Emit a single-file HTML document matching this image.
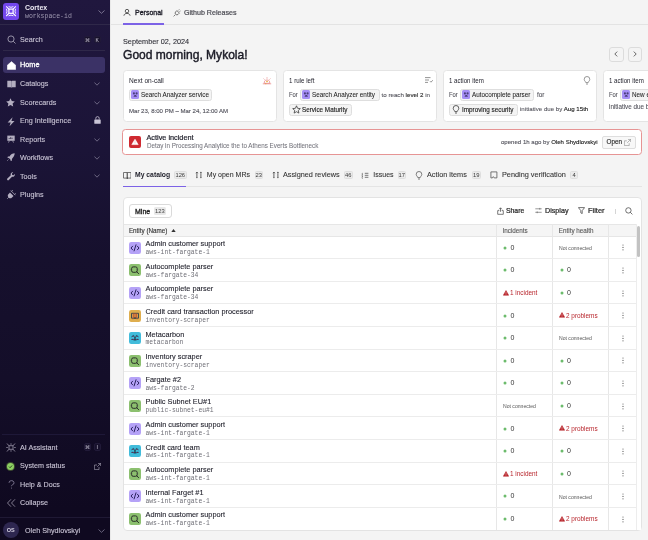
<!DOCTYPE html>
<html><head><meta charset="utf-8">
<style>
*{box-sizing:border-box;margin:0;padding:0}
html,body{width:648px;height:540px;overflow:hidden}
body{font-family:"Liberation Sans",sans-serif;background:#f4f4f4;position:relative;color:#1b1b24}
.abs{position:absolute}
svg{display:block}
.nowrap{white-space:nowrap}
.mono{font-family:"Liberation Mono",monospace}
.tx{position:absolute;line-height:10px;white-space:nowrap;color:#1d1d28}
.tx b{color:#222}
#sb{position:absolute;left:0;top:0;width:110px;height:540px;background:linear-gradient(180deg,#20173e 0%,#1b1437 28%,#16102d 48%,#140e29 70%,#0f0920 94%,#0f0920 100%);color:#d9d5e6}
#sb .t{position:absolute;left:20px;font-size:7.2px;line-height:8px;color:#c8c3d4;-webkit-text-stroke:.12px #c8c3d4;white-space:nowrap}
#sb svg{position:absolute}
.kb{position:absolute;width:7.3px;height:7.8px;border-radius:2px;border:.6px solid #211a38;background:#17112c;font-size:5px;line-height:6.6px;text-align:center;color:#d5d0e0}
.nb{position:absolute;top:47px;width:14.5px;height:14.7px;border:1px solid #dcdcdc;border-radius:3px;background:#f4f4f4}
.nb svg{position:absolute;left:-1px;top:-1px}
.card{position:absolute;top:70px;width:154px;height:51.5px;background:#fff;border:1px solid #e4e4e4;border-radius:3.5px}
.chip{position:absolute;height:12.3px;border:1px solid #dedede;border-radius:2.5px;background:#f4f4f4}
.ci{position:absolute;width:8.5px;height:8.5px;border-radius:1.5px;background:#a58ef6}
.ci svg{position:absolute;left:0;top:0}
.bd{position:absolute;top:170.7px;height:8px;background:#ebebeb;border:.6px solid #dedede;border-radius:1.5px;font-family:"Liberation Sans",sans-serif;font-size:5.8px;line-height:7.4px;text-align:center;color:#3a3a3a}
.ri{position:absolute;left:129px;width:12.2px;height:12px;border-radius:2.2px}
.ri svg{position:absolute;left:0;top:0}
.ri.code{background:#b5a2f7}
.ri.search{background:#8cc06f}
.ri.cc{background:#dfae4e}
.ri.team{background:#42bcdb}
.keb{position:absolute;left:621.8px;width:1.3px;height:6.2px;background:radial-gradient(circle,#666 .6px,transparent .7px) 0 0/1.3px 2.2px repeat-y}
</style></head>
<body><div id="wrap" style="position:absolute;left:0;top:0;width:648px;height:540px;overflow:hidden;will-change:transform">
<svg width="0" height="0" style="position:absolute">
<defs>
<g id="g-code"><path d="M3.6 4.2 2 6l1.6 1.8M8.4 4.2 10 6 8.4 7.8M7 2.8 5.1 8.9" fill="none" stroke="#2b2360" stroke-width="1" stroke-linecap="round" stroke-linejoin="round"/></g>
<g id="g-search"><rect x="2.6" y="2.9" width="5.6" height="5.4" rx="1.6" fill="none" stroke="#2a2f28" stroke-width="1"/><path d="M7.6 7.7 9.6 9.6" stroke="#2a2f28" stroke-width="1" stroke-linecap="round"/><path d="M2.2 4.8v1.6M8.6 4.8v1.6" stroke="#4a4f48" stroke-width=".8"/></g>
<g id="g-cc"><path d="M2.5 3.3h7v4.9h-7z" fill="none" stroke="#2e4050" stroke-width=".9"/><path d="M4.3 3.4v4.6M7.7 3.4v4.6" stroke="#b8472f" stroke-width=".9"/><path d="M6 3.3v5" stroke="#c24a2c" stroke-width="1"/><circle cx="6" cy="8.1" r=".8" fill="#23404a"/><path d="M3.3 8.2l.6 1.2M8.7 8.2l-.6 1.2" stroke="#b8472f" stroke-width=".7"/></g>
<g id="g-team"><path d="M2.4 4.9 4.6 3.3l2.4 5.6M9.6 4.9 7.4 3.3 5 8.9M2.4 7.4h7.2" fill="none" stroke="#1d4555" stroke-width=".8"/><g fill="#6a2150"><circle cx="4" cy="4.4" r=".6"/><circle cx="8" cy="4.4" r=".6"/><circle cx="3.3" cy="7.4" r=".6"/><circle cx="5.6" cy="7.4" r=".6"/><circle cx="8.7" cy="7.4" r=".6"/></g></g>
</defs></svg>
<div id="sb">
  <div class="abs" style="left:3px;top:3px;width:16px;height:16.5px;border-radius:3px;background:#7347ee"></div>
  <svg style="left:3px;top:3px" width="16" height="16.5" viewBox="0 0 16 16.5"><g fill="none" stroke="#fff"><rect x="5.9" y="6.1" width="4.2" height="4.2" stroke-width="1.2"/><path d="M3.2 3.4 5.9 6.1M12.8 3.4 10.1 6.1M3.2 13 5.9 10.3M12.8 13 10.1 10.3" stroke-width="1.1"/><path d="M5.6 3.6Q8 5 10.4 3.6M5.6 12.8Q8 11.4 10.4 12.8M3.4 5.8Q4.6 8.2 3.4 10.6M12.6 5.8Q11.4 8.2 12.6 10.6" stroke-width=".9"/></g></svg>
  <div class="abs nowrap" style="left:25px;top:4px;font-size:7px;line-height:8px;color:#eeebf5;font-weight:bold">Cortex</div>
  <div class="abs nowrap mono" style="left:25px;top:12.5px;font-size:6.5px;line-height:8px;color:#9e98b0">workspace-id</div>
  <svg style="left:98px;top:9.5px" width="7" height="4" viewBox="0 0 7 4"><path d="M.5.5 3.5 3.3 6.5.5" fill="none" stroke="#9f99b3" stroke-width=".7"/></svg>
  <div class="abs" style="left:0;top:24px;width:110px;height:1px;background:#2f2849"></div>
  <svg style="left:6.5px;top:34.5px" width="9" height="9" viewBox="0 0 9 9"><circle cx="4" cy="4" r="3.1" fill="none" stroke="#b3aec0" stroke-width=".8"/><path d="M6.3 6.3 8.5 8.5" stroke="#b3aec0" stroke-width=".8"/></svg>
  <div class="t" style="top:36px">Search</div>
  <div class="kb" style="left:83.5px;top:35.5px">⌘</div>
  <div class="kb" style="left:93.5px;top:35.5px">K</div>
  <div class="abs" style="left:3px;top:50px;width:102px;height:1px;background:#2f2849"></div>
  <div class="abs" style="left:3px;top:57px;width:102px;height:16px;border-radius:3px;background:#3b3266"></div>
  <svg style="left:6.5px;top:60.5px" width="9" height="9" viewBox="0 0 9 9"><path d="M.3 8.4V4.2L4.5.6l4.2 3.6v4.2z" fill="#fff" stroke="#fff" stroke-width=".5" stroke-linejoin="round"/></svg>
  <div class="t" style="top:61px;color:#fff;-webkit-text-stroke:.3px #fff;font-size:7.3px">Home</div>
  <svg style="left:6.5px;top:79.5px" width="9" height="8" viewBox="0 0 9 8"><path d="M.3.8h3.4c.5 0 .7.3.7.7v6.2C4.2 7.4 4 7.2 3.6 7.2H.3zM8.7.8H5.3c-.5 0-.7.3-.7.7v6.2c.2-.3.4-.5.8-.5h3.3z" fill="#b3aec0"/></svg>
  <div class="t" style="top:80px">Catalogs</div>
  <svg class="chev" style="left:94px;top:82px" width="6" height="4" viewBox="0 0 6 4"><path d="M.4.5 3 3.2 5.6.5" fill="none" stroke="#8e88a2" stroke-width=".7"/></svg>
  <svg style="left:6px;top:97.5px" width="9" height="9" viewBox="0 0 9 9"><path d="M4.5.3 5.8 3l3 .4L6.6 5.5l.6 3L4.5 7 1.8 8.5l.6-3L.2 3.4l3-.4z" fill="#b3aec0"/></svg>
  <div class="t" style="top:98.5px">Scorecards</div>
  <svg class="chev" style="left:94px;top:100.5px" width="6" height="4" viewBox="0 0 6 4"><path d="M.4.5 3 3.2 5.6.5" fill="none" stroke="#8e88a2" stroke-width=".7"/></svg>
  <svg style="left:6.8px;top:116.5px" width="8" height="9.5" viewBox="0 0 8 9.5"><path d="M5.6.2.6 5.4h3.1L2.5 9.3 7.5 4H4.4z" fill="#b3aec0"/></svg>
  <div class="t" style="top:117px">Eng Intelligence</div>
  <svg style="left:93.5px;top:115.5px" width="7" height="8" viewBox="0 0 7 8"><path d="M1.8 3.5V2.3a1.7 1.7 0 0 1 3.4 0v1.2" fill="none" stroke="#c9c4d6" stroke-width=".8"/><rect x=".3" y="3.4" width="6.4" height="4.4" rx=".6" fill="#c9c4d6"/></svg>
  <svg style="left:7px;top:135px" width="8" height="8" viewBox="0 0 8 8"><path d="M.3.6h7.4v5.2H.3z" fill="#b3aec0"/><path d="M1.5 7.6 2.3 5.8M6.5 7.6 5.7 5.8" stroke="#b3aec0" stroke-width=".7"/><path d="M2.2 4V3M3.6 4V2.2M5 4V2.7" stroke="#1d1636" stroke-width=".7"/></svg>
  <div class="t" style="top:135.7px">Reports</div>
  <svg class="chev" style="left:94px;top:137.5px" width="6" height="4" viewBox="0 0 6 4"><path d="M.4.5 3 3.2 5.6.5" fill="none" stroke="#8e88a2" stroke-width=".7"/></svg>
  <svg style="left:7px;top:153px" width="8" height="8" viewBox="0 0 8 8"><path d="M7.7.3C5.5.3 3.8 1.5 2.5 3.5L1 3.4.3 4.6l1.8.6 1.1 1.1.6 1.8 1.2-.7-.1-1.5C6.5 4.2 7.7 2.5 7.7.3z" fill="#b3aec0"/><path d="M1.5 6.5.3 7.7" stroke="#b3aec0" stroke-width=".7"/></svg>
  <div class="t" style="top:154px">Workflows</div>
  <svg class="chev" style="left:94px;top:155.5px" width="6" height="4" viewBox="0 0 6 4"><path d="M.4.5 3 3.2 5.6.5" fill="none" stroke="#8e88a2" stroke-width=".7"/></svg>
  <svg style="left:7px;top:171.5px" width="8" height="9" viewBox="0 0 8 9"><path d="M5.8.3a2.2 2.2 0 0 0-2 3L.4 6.6a1 1 0 0 0 1.4 1.5L5 4.7a2.2 2.2 0 0 0 2.8-2.6L6.5 3.3 5.2 2.9 4.9 1.6l1.3-1.2z" fill="#b3aec0"/></svg>
  <div class="t" style="top:172.7px">Tools</div>
  <svg class="chev" style="left:94px;top:174px" width="6" height="4" viewBox="0 0 6 4"><path d="M.4.5 3 3.2 5.6.5" fill="none" stroke="#8e88a2" stroke-width=".7"/></svg>
  <svg style="left:6.5px;top:189.5px" width="9" height="9" viewBox="0 0 9 9"><path d="M3 2.5 6.5 6 5 7.5a2.4 2.4 0 0 1-3.4-3.4z" fill="#b3aec0"/><path d="M1.8 7.2.3 8.7M4.5 1.3 5.8 0M7.7 4.5 9 3.2M3.8.6 8.4 5.2" stroke="#b3aec0" stroke-width=".8"/></svg>
  <div class="t" style="top:191px">Plugins</div>

  <div class="abs" style="left:2px;top:433.5px;width:103px;height:1px;background:#1e1838"></div>
  <svg style="left:6px;top:442.5px" width="10" height="9" viewBox="0 0 10 9"><g fill="none" stroke="#b3aec0" stroke-width=".7"><rect x="3" y="2.8" width="4" height="3.4"/><path d="M1 .5 3 2.8M9 .5 7 2.8M1 8.5 3 6.2M9 8.5 7 6.2M5 .3v1.5M5 7.2v1.5M.3 4.5h1.5M8.2 4.5h1.5"/></g></svg>
  <div class="t" style="top:443.5px">AI Assistant</div>
  <div class="kb" style="left:83.5px;top:443px">⌘</div>
  <div class="kb" style="left:93.5px;top:443px">I</div>
  <div class="abs" style="left:6px;top:461.5px;width:9px;height:9px;border-radius:50%;background:#3b4a30"></div>
  <div class="abs" style="left:7px;top:462.5px;width:7px;height:7px;border-radius:50%;background:#8ccf62"></div>
  <svg style="left:7px;top:462.5px" width="7" height="7" viewBox="0 0 7 7"><path d="M2 3.6 3.1 4.7 5.1 2.5" fill="none" stroke="#1a2a12" stroke-width=".8"/></svg>
  <div class="t" style="top:462px">System status</div>
  <svg style="left:94px;top:462.5px" width="7" height="7" viewBox="0 0 7 7"><path d="M5 4v2.6H.4V2H3M4 .4h2.6V3M6.6.4 3.2 3.8" fill="none" stroke="#b3aec0" stroke-width=".6"/></svg>
  <svg style="left:7.5px;top:479.5px" width="7" height="9" viewBox="0 0 7 9"><path d="M1 2.8a2.5 2.2 0 1 1 3.3 2.1C3.7 5.2 3.5 5.6 3.5 6.2" fill="none" stroke="#8e88a2" stroke-width=".8"/><circle cx="3.5" cy="8" r=".5" fill="#8e88a2"/></svg>
  <div class="t" style="top:480.5px">Help &amp; Docs</div>
  <svg style="left:6.5px;top:498.5px" width="9" height="8" viewBox="0 0 9 8"><path d="M4 .3.5 4 4 7.7M8 .3 4.5 4 8 7.7" fill="none" stroke="#b3aec0" stroke-width=".7"/></svg>
  <div class="t" style="top:499px">Collapse</div>
  <div class="abs" style="left:0;top:516.5px;width:110px;height:1px;background:#1f1934"></div>
  <div class="abs" style="left:2.5px;top:521.5px;width:16.5px;height:16.5px;border-radius:50%;background:#2e2750;font-size:5.5px;line-height:16.5px;text-align:center;color:#d7d2e3;font-weight:bold">OS</div>
  <div class="t" style="top:526.5px;left:25px">Oleh Shydlovskyi</div>
  <svg style="left:98px;top:529px" width="7" height="4" viewBox="0 0 7 4"><path d="M.5.5 3.5 3.3 6.5.5" fill="none" stroke="#8e88a2" stroke-width=".7"/></svg>
</div>
<div class="abs" style="left:110px;top:0;width:1px;height:540px;background:#e9e9e9"></div>

<!-- main header -->
<div class="abs" style="left:111px;top:24px;width:537px;height:1px;background:#e3e3e3"></div>
<svg class="abs" style="left:123px;top:9px" width="8" height="7" viewBox="0 0 8 7"><circle cx="4" cy="2.1" r="1.75" fill="none" stroke="#333" stroke-width=".8"/><path d="M.9 6.7C1.2 5.1 2.4 4.4 4 4.4s2.8.7 3.1 2.3" fill="none" stroke="#333" stroke-width=".8"/></svg>
<div class="abs nowrap" style="left:135px;top:8.4px;font-size:7.3px;line-height:9px;-webkit-text-stroke:.32px #1b1b26;color:#1b1b26;transform:scaleX(.96);transform-origin:0 0">Personal</div>
<div class="abs" style="left:123px;top:23.2px;width:40.7px;height:1.5px;background:#7c62e6"></div>
<svg class="abs" style="left:172.5px;top:8.5px" width="8" height="8" viewBox="0 0 8 8"><path d="M2.3 5.7.6 7.4M5.3 1.4l1-1M6.6 2.7l1-1" fill="none" stroke="#555" stroke-width=".75"/><path d="M3.9 1.6 6.4 4.1 5 5.5a1.8 1.8 0 0 1-2.5-2.5z" fill="none" stroke="#555" stroke-width=".8"/></svg>
<div class="abs nowrap" style="left:184px;top:9.3px;font-size:7.1px;line-height:9px;-webkit-text-stroke:.2px #4a4a52;color:#4a4a52">Github Releases</div>

<div class="abs nowrap" style="left:123px;top:37px;font-size:7.3px;color:#2e2e36;-webkit-text-stroke:.1px #2e2e36">September 02, 2024</div>
<div class="abs nowrap" style="left:122.8px;top:48.2px;font-size:12.7px;line-height:14px;-webkit-text-stroke:.45px #1b1b26;transform:scaleX(.95);transform-origin:0 0;color:#1b1b26">Good morning, Mykola!</div>
<div class="nb" style="left:609px"><svg width="14" height="14" viewBox="0 0 14 14"><path d="M8.2 4.6 5.8 7l2.4 2.4" fill="none" stroke="#555" stroke-width=".9"/></svg></div>
<div class="nb" style="left:627.5px"><svg width="14" height="14" viewBox="0 0 14 14"><path d="M5.8 4.6 8.2 7 5.8 9.4" fill="none" stroke="#555" stroke-width=".9"/></svg></div>
<div class="card" style="left:123px"></div>
<div class="card" style="left:283px"></div>
<div class="card" style="left:443px"></div>
<div class="card" style="left:603px"></div>
<div class="tx " style="left:129.00px;top:75.91px;font-size:6.6px;">Next on-call</div>
<svg class="abs" style="left:261.5px;top:76.5px" width="10" height="8" viewBox="0 0 10 8"><path d="M2.2 6.3C2.2 4 3 3 5 3s2.8 1 2.8 3.3zM.8 6.8h8.4M5 .3v1.3M1.6 1.6l.9.9M8.4 1.6l-.9.9" fill="none" stroke="#e88a8a" stroke-width=".8"/><circle cx="5" cy="4.6" r=".75" fill="#e0a21a"/><circle cx="3.8" cy="6.8" r=".5" fill="#e0a21a"/></svg>
<div class="chip" style="left:129px;top:88.8px;width:82.5px"></div><span class="ci" style="left:130.5px;top:90.3px"><svg width="8.5" height="8.5" viewBox="0 0 8.5 8.5"><g fill="#4a3d7a"><circle cx="2.9" cy="3.4" r="1.05"/><circle cx="5.6" cy="3.4" r="1.05"/><path d="M2.6 6.7c.2-1 .8-1.7 1.65-1.7s1.45.7 1.65 1.7z"/></g></svg></span><div class="tx " style="left:141.00px;top:90.41px;font-size:6.6px;transform:scaleX(0.96);transform-origin:0 0;-webkit-text-stroke:.05px #222;color:#222">Search Analyzer service</div>
<div class="tx " style="left:129.00px;top:105.70px;font-size:6.05px;color:#55555e;-webkit-text-stroke:.14px #55555e">Mar 23, 8:00 PM – Mar 24, 12:00 AM</div>
<div class="tx " style="left:289.00px;top:75.91px;font-size:6.6px;transform:scaleX(0.935);transform-origin:0 0;">1 rule left</div>
<svg class="abs" style="left:424.5px;top:77px" width="8" height="7" viewBox="0 0 8 7"><path d="M0 .6h5.5M0 3h4M0 5.4h3M5 4.2l1 1 1.8-2" fill="none" stroke="#666" stroke-width=".7"/></svg>
<div class="tx " style="left:289.00px;top:89.78px;font-size:6.4px;transform:scaleX(0.92);transform-origin:0 0;color:#52525b;-webkit-text-stroke:.08px #52525b">For</div>
<div class="chip" style="left:300px;top:88.8px;width:79.5px"></div><span class="ci" style="left:301.5px;top:90.3px"><svg width="8.5" height="8.5" viewBox="0 0 8.5 8.5"><g fill="#4a3d7a"><circle cx="2.9" cy="3.4" r="1.05"/><circle cx="5.6" cy="3.4" r="1.05"/><path d="M2.6 6.7c.2-1 .8-1.7 1.65-1.7s1.45.7 1.65 1.7z"/></g></svg></span><div class="tx " style="left:312.00px;top:90.41px;font-size:6.6px;transform:scaleX(0.96);transform-origin:0 0;-webkit-text-stroke:.05px #222;color:#222">Search Analyzer entity</div>
<div class="tx " style="left:381.50px;top:89.85px;font-size:6.2px;color:#52525b;-webkit-text-stroke:.08px #52525b">to reach <b style="font-weight:normal;-webkit-text-stroke:.1px #222">level 2</b> in</div>
<div class="chip" style="left:289px;top:103.5px;width:62.5px"></div><svg class="abs" style="left:291.5px;top:104.8px" width="9" height="9" viewBox="0 0 9 9"><path d="M4.5.8 5.6 3.3l2.7.3-2 1.8.6 2.7-2.4-1.4-2.4 1.4.6-2.7-2-1.8 2.7-.3z" fill="none" stroke="#333" stroke-width=".75" stroke-linejoin="round"/></svg><div class="tx " style="left:302.00px;top:105.11px;font-size:6.6px;transform:scaleX(0.96);transform-origin:0 0;-webkit-text-stroke:.14px #222;color:#222">Service Maturity</div>
<div class="tx " style="left:449.00px;top:75.91px;font-size:6.6px;transform:scaleX(0.93);transform-origin:0 0;">1 action item</div>
<svg class="abs" style="left:583px;top:76px" width="8" height="9" viewBox="0 0 8 9"><path d="M2.8 6.6C2.6 5.4 1.2 4.8 1.2 3.3a2.8 2.8 0 0 1 5.6 0c0 1.5-1.4 2.1-1.6 3.3zM3 8h2" fill="none" stroke="#777" stroke-width=".75"/></svg>
<div class="tx " style="left:449.00px;top:89.78px;font-size:6.4px;transform:scaleX(0.92);transform-origin:0 0;color:#52525b;-webkit-text-stroke:.08px #52525b">For</div>
<div class="chip" style="left:460px;top:88.8px;width:74px"></div><span class="ci" style="left:461.5px;top:90.3px"><svg width="8.5" height="8.5" viewBox="0 0 8.5 8.5"><g fill="#4a3d7a"><circle cx="2.9" cy="3.4" r="1.05"/><circle cx="5.6" cy="3.4" r="1.05"/><path d="M2.6 6.7c.2-1 .8-1.7 1.65-1.7s1.45.7 1.65 1.7z"/></g></svg></span><div class="tx " style="left:472.00px;top:90.41px;font-size:6.6px;transform:scaleX(0.96);transform-origin:0 0;-webkit-text-stroke:.05px #222;color:#222">Autocomplete parser</div>
<div class="tx " style="left:537.00px;top:89.78px;font-size:6.4px;color:#52525b;-webkit-text-stroke:.08px #52525b">for</div>
<div class="chip" style="left:449px;top:103.5px;width:69px"></div><svg class="abs" style="left:451.5px;top:104.5px" width="8" height="9" viewBox="0 0 8 9"><path d="M2.8 6.6C2.6 5.4 1.2 4.8 1.2 3.3a2.8 2.8 0 0 1 5.6 0c0 1.5-1.4 2.1-1.6 3.3zM3 8h2" fill="none" stroke="#333" stroke-width=".75"/></svg><div class="tx " style="left:462.00px;top:105.11px;font-size:6.6px;transform:scaleX(0.96);transform-origin:0 0;-webkit-text-stroke:.14px #222;color:#222">Improving security</div>
<div class="tx " style="left:520.00px;top:104.47px;font-size:6.15px;color:#52525b;-webkit-text-stroke:.08px #52525b">initiative due by <b style="font-weight:normal;-webkit-text-stroke:.12px #222">Aug 15th</b></div>
<div class="tx " style="left:609.00px;top:75.91px;font-size:6.6px;transform:scaleX(0.93);transform-origin:0 0;">1 action item</div>
<div class="tx " style="left:609.00px;top:89.78px;font-size:6.4px;transform:scaleX(0.92);transform-origin:0 0;color:#52525b;-webkit-text-stroke:.08px #52525b">For</div>
<div class="chip" style="left:620px;top:88.8px;width:60px"></div><span class="ci" style="left:621.5px;top:90.3px"><svg width="8.5" height="8.5" viewBox="0 0 8.5 8.5"><g fill="#4a3d7a"><circle cx="2.9" cy="3.4" r="1.05"/><circle cx="5.6" cy="3.4" r="1.05"/><path d="M2.6 6.7c.2-1 .8-1.7 1.65-1.7s1.45.7 1.65 1.7z"/></g></svg></span><div class="tx " style="left:632.00px;top:90.41px;font-size:6.6px;transform:scaleX(0.96);transform-origin:0 0;-webkit-text-stroke:.05px #222;color:#222">New entity</div>
<div class="tx " style="left:609.00px;top:102.42px;font-size:6.3px;color:#52525b;-webkit-text-stroke:.08px #52525b">initiative due by</div>
<div class="abs" style="left:122px;top:129px;width:520px;height:26px;border:1.2px solid #e69494;border-radius:3.5px;background:#fff"></div>
<div class="abs" style="left:129px;top:136px;width:12px;height:12px;border-radius:2px;background:#cf2a31"><svg width="12" height="12" viewBox="0 0 12 12"><path d="M6 3.2 9.2 8.6H2.8z" fill="#fff" stroke="#fff" stroke-width=".6" stroke-linejoin="round"/><path d="M6 5.3v1.6M6 7.5v.5" stroke="#e89a9d" stroke-width=".6"/></svg></div>
<div class="tx " style="left:146.50px;top:132.57px;font-size:7.3px;color:#1d1d28;-webkit-text-stroke:.2px #1d1d28">Active incident</div>
<div class="tx " style="left:146.50px;top:141.46px;font-size:6.6px;transform:scaleX(0.95);transform-origin:0 0;color:#74747c;-webkit-text-stroke:.05px #74747c">Detay in Processing Analytice the to Athens Everts Bottleneck</div>
<div class="tx " style="left:500.50px;top:137.19px;font-size:5.8px;transform:scaleX(1.045);transform-origin:0 0;color:#55555e;-webkit-text-stroke:.12px #55555e">opened 1h ago by <b style="font-weight:normal;color:#222;-webkit-text-stroke:.12px #222">Oleh Shydlovskyi</b></div>
<div class="abs" style="left:602px;top:136px;width:34px;height:12.5px;border:1px solid #dedede;border-radius:2px;background:#f8f8f8"></div>
<div class="tx " style="left:606.50px;top:137.12px;font-size:6.3px;-webkit-text-stroke:.12px #222;color:#222">Open</div>
<svg class="abs" style="left:623.5px;top:138.5px" width="7" height="7" viewBox="0 0 7 7"><path d="M5.2 4.2v2.4H.4V1.8h2.4M4 .4h2.6V3M6.6.4 3.2 3.8" fill="none" stroke="#888" stroke-width=".6"/></svg>
<div class="abs" style="left:123px;top:186px;width:518.5px;height:1px;background:#e4e4e4"></div>
<div class="abs" style="left:123px;top:185.6px;width:63px;height:1.6px;background:#7c62e6"></div>
<svg class="abs" style="left:122.8px;top:171.5px" width="8.5" height="7" viewBox="0 0 8.5 7"><path d="M.5.5h3.75v5.6H.5zM4.25.5H8v5.6H4.25z" fill="none" stroke="#555" stroke-width=".8"/><circle cx="4.25" cy="6.2" r=".6" fill="#222"/></svg>
<div class="tx " style="left:135.00px;top:170.04px;font-size:6.8px;font-weight:bold;color:#1d1d28">My catalog</div>
<div class="bd" style="left:174px;width:12.5px">126</div>
<svg class="abs" style="left:195px;top:171px" width="8" height="8" viewBox="0 0 8 8"><path d="M1.9 1.2v5.6M5.9 2.8v4M.9 2.2 1.9 1l1 1.2" fill="none" stroke="#555" stroke-width=".9"/><circle cx="5.9" cy="1.7" r=".85" fill="#555"/><circle cx="1.9" cy="6.6" r=".6" fill="#555"/><circle cx="5.9" cy="6.6" r=".6" fill="#555"/></svg>
<div class="tx " style="left:206.80px;top:169.97px;font-size:7.0px;color:#333;-webkit-text-stroke:.08px #333">My open MRs</div>
<div class="bd" style="left:254.5px;width:8.5px">23</div>
<svg class="abs" style="left:271.5px;top:171px" width="8" height="8" viewBox="0 0 8 8"><path d="M1.9 1.2v5.6M5.9 2.8v4M.9 2.2 1.9 1l1 1.2" fill="none" stroke="#555" stroke-width=".9"/><circle cx="5.9" cy="1.7" r=".85" fill="#555"/><circle cx="1.9" cy="6.6" r=".6" fill="#555"/><circle cx="5.9" cy="6.6" r=".6" fill="#555"/></svg>
<div class="tx " style="left:283.30px;top:169.94px;font-size:7.1px;transform:scaleX(1.025);transform-origin:0 0;color:#333;-webkit-text-stroke:.08px #333">Assigned reviews</div>
<div class="bd" style="left:344px;width:8.5px">46</div>
<svg class="abs" style="left:361px;top:171.5px" width="8" height="8" viewBox="0 0 8 8"><path d="M1.8 1.1.8 2l1 .9-1 .9 1 .9-1 .9 1 .9" fill="none" stroke="#555" stroke-width=".75"/><path d="M3.8 1.3H7.4M3.8 3.3H7.4M3.8 5.3H7.4" fill="none" stroke="#777" stroke-width="1"/></svg>
<div class="tx " style="left:373.30px;top:169.97px;font-size:7.0px;color:#333;-webkit-text-stroke:.08px #333">Issues</div>
<div class="bd" style="left:397.5px;width:8.5px">17</div>
<svg class="abs" style="left:415px;top:170.5px" width="8" height="9" viewBox="0 0 8 9"><path d="M2.8 6.6C2.6 5.4 1.2 4.8 1.2 3.3a2.8 2.8 0 0 1 5.6 0c0 1.5-1.4 2.1-1.6 3.3zM3 8h2" fill="none" stroke="#555" stroke-width=".75"/></svg>
<div class="tx " style="left:427.00px;top:169.94px;font-size:7.1px;transform:scaleX(1.03);transform-origin:0 0;color:#333;-webkit-text-stroke:.08px #333">Action items</div>
<div class="bd" style="left:472px;width:8.5px">19</div>
<svg class="abs" style="left:489.5px;top:171px" width="8" height="8" viewBox="0 0 8 8"><path d="M.9 6.9V.9h6v6H4.2L3.3 5.6 2.4 6.9z" fill="none" stroke="#555" stroke-width=".8" stroke-linejoin="round"/></svg>
<div class="tx " style="left:501.60px;top:169.94px;font-size:7.1px;transform:scaleX(1.03);transform-origin:0 0;color:#333;-webkit-text-stroke:.08px #333">Pending verification</div>
<div class="bd" style="left:570px;width:8px">4</div>
<div class="abs" style="left:123px;top:197px;width:518.5px;height:334px;background:#fff;border:1px solid #e3e3e3;border-radius:4px"></div>
<div class="abs" style="left:129px;top:203.5px;width:42.5px;height:14.5px;border:1px solid #dadada;border-radius:3px;background:#fff"></div>
<div class="tx " style="left:135.00px;top:206.67px;font-size:7px;-webkit-text-stroke:.32px #222;color:#222">Mine</div>
<div class="bd" style="left:154.2px;top:207px;width:11.5px;height:7.6px;line-height:7.6px;padding-top:.7px;border:none;background:#e8e8e8;font-size:5.8px;color:#444">123</div>
<svg class="abs" style="left:496.5px;top:206.5px" width="7" height="8" viewBox="0 0 7 8"><path d="M3.5 4.8V.9M2 2.3 3.5.8 5 2.3M2.3 3.6H.7v3.7h5.6V3.6H4.7" fill="none" stroke="#444" stroke-width=".7"/></svg>
<div class="tx " style="left:505.90px;top:206.01px;font-size:6.9px;-webkit-text-stroke:.22px #2a2a2a;color:#2a2a2a">Share</div>
<svg class="abs" style="left:534.5px;top:207px" width="7" height="7" viewBox="0 0 7 7"><path d="M.3 1.8h6.4M.3 5.3h6.4M4.8.9v1.8M2.2 4.4v1.8" fill="none" stroke="#555" stroke-width=".6"/></svg>
<div class="tx " style="left:544.60px;top:206.01px;font-size:6.9px;transform:scaleX(1.04);transform-origin:0 0;-webkit-text-stroke:.22px #2a2a2a;color:#2a2a2a">Display</div>
<svg class="abs" style="left:578px;top:207.3px" width="7" height="7" viewBox="0 0 7 7"><path d="M.4.6h6.2L4.2 3.6v3L2.8 5.8V3.6z" fill="none" stroke="#444" stroke-width=".75" stroke-linejoin="round"/></svg>
<div class="tx " style="left:588.00px;top:206.01px;font-size:6.9px;transform:scaleX(1.08);transform-origin:0 0;-webkit-text-stroke:.22px #2a2a2a;color:#2a2a2a">Filter</div>
<div class="abs" style="left:615.3px;top:208.5px;width:.8px;height:5.5px;background:#d5d5d5"></div>
<svg class="abs" style="left:624.5px;top:206.8px" width="8" height="8" viewBox="0 0 8 8"><circle cx="3.4" cy="3.4" r="2.7" fill="none" stroke="#444" stroke-width=".75"/><path d="M5.3 5.3 7.4 7.4" stroke="#444" stroke-width=".75"/></svg>
<div class="abs" style="left:124px;top:223.5px;width:512px;height:13px;background:#f5f5f5;border-top:1px solid #e6e6e6;border-bottom:1px solid #e6e6e6"></div>
<div class="tx " style="left:128.90px;top:225.82px;font-size:6.3px;color:#333;-webkit-text-stroke:.12px #333">Entity (Name)</div>
<svg class="abs" style="left:171.3px;top:228.7px" width="5" height="3" viewBox="0 0 5 3"><path d="M2.5.1 4.7 2.9H.3z" fill="#333"/></svg>
<div class="tx " style="left:502.50px;top:225.82px;font-size:6.3px;color:#555;-webkit-text-stroke:.1px #555">Incidents</div>
<div class="tx " style="left:558.80px;top:225.82px;font-size:6.3px;color:#555;-webkit-text-stroke:.1px #555">Entity health</div>
<div class="abs" style="left:496px;top:223.5px;width:1px;height:306.5px;background:#e7e7e7"></div>
<div class="abs" style="left:552px;top:223.5px;width:1px;height:306.5px;background:#e7e7e7"></div>
<div class="abs" style="left:608px;top:223.5px;width:1px;height:306.5px;background:#e7e7e7"></div>
<div class="abs" style="left:636px;top:223.5px;width:5px;height:306px;background:#fff;border-left:1px solid #ededed"></div>
<div class="abs" style="left:637.2px;top:226px;width:2.8px;height:31px;border-radius:1.5px;background:#c2c2c2"></div>
<div class="abs" style="left:124px;top:258.10px;width:512px;height:1px;background:#ececec"></div>
<div class="ri code" style="top:241.70px"><svg width="12" height="12" viewBox="0 0 12 12"><use href="#g-code"/></svg></div>
<div class="tx " style="left:145.50px;top:239.25px;font-size:7.35px;color:#1d1d28;-webkit-text-stroke:.1px #1d1d28">Admin customer support</div>
<div class="tx mono" style="left:145.50px;top:248.02px;font-size:6.3px;color:#6e6e76">aws-int-fargate-1</div>
<svg class="abs" style="left:503.20px;top:245.80px" width="4" height="4" viewBox="0 0 4 4"><circle cx="2" cy="2" r="1.5" fill="#6cbb6c"/></svg>
<div class="tx " style="left:510.50px;top:242.77px;font-size:7.0px;color:#333">0</div>
<div class="tx " style="left:559.00px;top:243.03px;font-size:5.1px;color:#555">Not connected</div>
<svg class="abs" style="left:620.5px;top:244.30px" width="4" height="7" viewBox="0 0 4 7"><g fill="#5a5a5a"><circle cx="2" cy="1" r=".6"/><circle cx="2" cy="3.4" r=".6"/><circle cx="2" cy="5.8" r=".6"/></g></svg>
<div class="abs" style="left:124px;top:280.70px;width:512px;height:1px;background:#ececec"></div>
<div class="ri search" style="top:264.30px"><svg width="12" height="12" viewBox="0 0 12 12"><use href="#g-search"/></svg></div>
<div class="tx " style="left:145.50px;top:261.85px;font-size:7.35px;color:#1d1d28;-webkit-text-stroke:.1px #1d1d28">Autocomplete parser</div>
<div class="tx mono" style="left:145.50px;top:270.62px;font-size:6.3px;color:#6e6e76">aws-fargate-34</div>
<svg class="abs" style="left:503.20px;top:268.40px" width="4" height="4" viewBox="0 0 4 4"><circle cx="2" cy="2" r="1.5" fill="#6cbb6c"/></svg>
<div class="tx " style="left:510.50px;top:265.37px;font-size:7.0px;color:#333">0</div>
<svg class="abs" style="left:559.70px;top:268.40px" width="4" height="4" viewBox="0 0 4 4"><circle cx="2" cy="2" r="1.5" fill="#6cbb6c"/></svg>
<div class="tx " style="left:567.00px;top:265.37px;font-size:7.0px;color:#333">0</div>
<svg class="abs" style="left:620.5px;top:266.90px" width="4" height="7" viewBox="0 0 4 7"><g fill="#5a5a5a"><circle cx="2" cy="1" r=".6"/><circle cx="2" cy="3.4" r=".6"/><circle cx="2" cy="5.8" r=".6"/></g></svg>
<div class="abs" style="left:124px;top:303.30px;width:512px;height:1px;background:#ececec"></div>
<div class="ri code" style="top:286.90px"><svg width="12" height="12" viewBox="0 0 12 12"><use href="#g-code"/></svg></div>
<div class="tx " style="left:145.50px;top:284.45px;font-size:7.35px;color:#1d1d28;-webkit-text-stroke:.1px #1d1d28">Autocomplete parser</div>
<div class="tx mono" style="left:145.50px;top:293.22px;font-size:6.3px;color:#6e6e76">aws-fargate-34</div>
<svg class="abs" style="left:502.7px;top:289.7px" width="6" height="6" viewBox="0 0 6 6"><path d="M3 .5 5.7 5.3H.3z" fill="#b8262d" stroke="#b8262d" stroke-width=".5" stroke-linejoin="round"/><path d="M3 2.2v1.5M3 4.3v.5" stroke="#fbe3e3" stroke-width=".6"/></svg>
<div class="tx " style="left:510.00px;top:288.18px;font-size:6.4px;color:#b8262d">1 incident</div>
<svg class="abs" style="left:559.70px;top:291.00px" width="4" height="4" viewBox="0 0 4 4"><circle cx="2" cy="2" r="1.5" fill="#6cbb6c"/></svg>
<div class="tx " style="left:567.00px;top:287.97px;font-size:7.0px;color:#333">0</div>
<svg class="abs" style="left:620.5px;top:289.50px" width="4" height="7" viewBox="0 0 4 7"><g fill="#5a5a5a"><circle cx="2" cy="1" r=".6"/><circle cx="2" cy="3.4" r=".6"/><circle cx="2" cy="5.8" r=".6"/></g></svg>
<div class="abs" style="left:124px;top:325.90px;width:512px;height:1px;background:#ececec"></div>
<div class="ri cc" style="top:309.50px"><svg width="12" height="12" viewBox="0 0 12 12"><use href="#g-cc"/></svg></div>
<div class="tx " style="left:145.50px;top:307.05px;font-size:7.35px;color:#1d1d28;-webkit-text-stroke:.1px #1d1d28">Credit card transaction processor</div>
<div class="tx mono" style="left:145.50px;top:315.82px;font-size:6.3px;color:#6e6e76">inventory-scraper</div>
<svg class="abs" style="left:503.20px;top:313.60px" width="4" height="4" viewBox="0 0 4 4"><circle cx="2" cy="2" r="1.5" fill="#6cbb6c"/></svg>
<div class="tx " style="left:510.50px;top:310.57px;font-size:7.0px;color:#333">0</div>
<svg class="abs" style="left:558.7px;top:312.3px" width="6" height="6" viewBox="0 0 6 6"><path d="M3 .5 5.7 5.3H.3z" fill="#b8262d" stroke="#b8262d" stroke-width=".5" stroke-linejoin="round"/><path d="M3 2.2v1.5M3 4.3v.5" stroke="#fbe3e3" stroke-width=".6"/></svg>
<div class="tx " style="left:566.00px;top:310.78px;font-size:6.4px;color:#b8262d">2 problems</div>
<svg class="abs" style="left:620.5px;top:312.10px" width="4" height="7" viewBox="0 0 4 7"><g fill="#5a5a5a"><circle cx="2" cy="1" r=".6"/><circle cx="2" cy="3.4" r=".6"/><circle cx="2" cy="5.8" r=".6"/></g></svg>
<div class="abs" style="left:124px;top:348.50px;width:512px;height:1px;background:#ececec"></div>
<div class="ri team" style="top:332.10px"><svg width="12" height="12" viewBox="0 0 12 12"><use href="#g-team"/></svg></div>
<div class="tx " style="left:145.50px;top:329.65px;font-size:7.35px;color:#1d1d28;-webkit-text-stroke:.1px #1d1d28">Metacarbon</div>
<div class="tx mono" style="left:145.50px;top:338.42px;font-size:6.3px;color:#6e6e76">metacarbon</div>
<svg class="abs" style="left:503.20px;top:336.20px" width="4" height="4" viewBox="0 0 4 4"><circle cx="2" cy="2" r="1.5" fill="#6cbb6c"/></svg>
<div class="tx " style="left:510.50px;top:333.17px;font-size:7.0px;color:#333">0</div>
<div class="tx " style="left:559.00px;top:333.43px;font-size:5.1px;color:#555">Not connected</div>
<svg class="abs" style="left:620.5px;top:334.70px" width="4" height="7" viewBox="0 0 4 7"><g fill="#5a5a5a"><circle cx="2" cy="1" r=".6"/><circle cx="2" cy="3.4" r=".6"/><circle cx="2" cy="5.8" r=".6"/></g></svg>
<div class="abs" style="left:124px;top:371.10px;width:512px;height:1px;background:#ececec"></div>
<div class="ri search" style="top:354.70px"><svg width="12" height="12" viewBox="0 0 12 12"><use href="#g-search"/></svg></div>
<div class="tx " style="left:145.50px;top:352.25px;font-size:7.35px;color:#1d1d28;-webkit-text-stroke:.1px #1d1d28">Inventory scraper</div>
<div class="tx mono" style="left:145.50px;top:361.02px;font-size:6.3px;color:#6e6e76">inventory-scraper</div>
<svg class="abs" style="left:503.20px;top:358.80px" width="4" height="4" viewBox="0 0 4 4"><circle cx="2" cy="2" r="1.5" fill="#6cbb6c"/></svg>
<div class="tx " style="left:510.50px;top:355.77px;font-size:7.0px;color:#333">0</div>
<svg class="abs" style="left:559.70px;top:358.80px" width="4" height="4" viewBox="0 0 4 4"><circle cx="2" cy="2" r="1.5" fill="#6cbb6c"/></svg>
<div class="tx " style="left:567.00px;top:355.77px;font-size:7.0px;color:#333">0</div>
<svg class="abs" style="left:620.5px;top:357.30px" width="4" height="7" viewBox="0 0 4 7"><g fill="#5a5a5a"><circle cx="2" cy="1" r=".6"/><circle cx="2" cy="3.4" r=".6"/><circle cx="2" cy="5.8" r=".6"/></g></svg>
<div class="abs" style="left:124px;top:393.70px;width:512px;height:1px;background:#ececec"></div>
<div class="ri code" style="top:377.30px"><svg width="12" height="12" viewBox="0 0 12 12"><use href="#g-code"/></svg></div>
<div class="tx " style="left:145.50px;top:374.85px;font-size:7.35px;color:#1d1d28;-webkit-text-stroke:.1px #1d1d28">Fargate #2</div>
<div class="tx mono" style="left:145.50px;top:383.62px;font-size:6.3px;color:#6e6e76">aws-fargate-2</div>
<svg class="abs" style="left:503.20px;top:381.40px" width="4" height="4" viewBox="0 0 4 4"><circle cx="2" cy="2" r="1.5" fill="#6cbb6c"/></svg>
<div class="tx " style="left:510.50px;top:378.37px;font-size:7.0px;color:#333">0</div>
<svg class="abs" style="left:559.70px;top:381.40px" width="4" height="4" viewBox="0 0 4 4"><circle cx="2" cy="2" r="1.5" fill="#6cbb6c"/></svg>
<div class="tx " style="left:567.00px;top:378.37px;font-size:7.0px;color:#333">0</div>
<svg class="abs" style="left:620.5px;top:379.90px" width="4" height="7" viewBox="0 0 4 7"><g fill="#5a5a5a"><circle cx="2" cy="1" r=".6"/><circle cx="2" cy="3.4" r=".6"/><circle cx="2" cy="5.8" r=".6"/></g></svg>
<div class="abs" style="left:124px;top:416.30px;width:512px;height:1px;background:#ececec"></div>
<div class="ri search" style="top:399.90px"><svg width="12" height="12" viewBox="0 0 12 12"><use href="#g-search"/></svg></div>
<div class="tx " style="left:145.50px;top:397.45px;font-size:7.35px;color:#1d1d28;-webkit-text-stroke:.1px #1d1d28">Public Subnet EU#1</div>
<div class="tx mono" style="left:145.50px;top:406.22px;font-size:6.3px;color:#6e6e76">public-subnet-eu#1</div>
<div class="tx " style="left:503.00px;top:401.23px;font-size:5.1px;color:#555">Not connected</div>
<svg class="abs" style="left:559.70px;top:404.00px" width="4" height="4" viewBox="0 0 4 4"><circle cx="2" cy="2" r="1.5" fill="#6cbb6c"/></svg>
<div class="tx " style="left:567.00px;top:400.97px;font-size:7.0px;color:#333">0</div>
<svg class="abs" style="left:620.5px;top:402.50px" width="4" height="7" viewBox="0 0 4 7"><g fill="#5a5a5a"><circle cx="2" cy="1" r=".6"/><circle cx="2" cy="3.4" r=".6"/><circle cx="2" cy="5.8" r=".6"/></g></svg>
<div class="abs" style="left:124px;top:438.90px;width:512px;height:1px;background:#ececec"></div>
<div class="ri code" style="top:422.50px"><svg width="12" height="12" viewBox="0 0 12 12"><use href="#g-code"/></svg></div>
<div class="tx " style="left:145.50px;top:420.05px;font-size:7.35px;color:#1d1d28;-webkit-text-stroke:.1px #1d1d28">Admin customer support</div>
<div class="tx mono" style="left:145.50px;top:428.82px;font-size:6.3px;color:#6e6e76">aws-int-fargate-1</div>
<svg class="abs" style="left:503.20px;top:426.60px" width="4" height="4" viewBox="0 0 4 4"><circle cx="2" cy="2" r="1.5" fill="#6cbb6c"/></svg>
<div class="tx " style="left:510.50px;top:423.57px;font-size:7.0px;color:#333">0</div>
<svg class="abs" style="left:558.7px;top:425.3px" width="6" height="6" viewBox="0 0 6 6"><path d="M3 .5 5.7 5.3H.3z" fill="#b8262d" stroke="#b8262d" stroke-width=".5" stroke-linejoin="round"/><path d="M3 2.2v1.5M3 4.3v.5" stroke="#fbe3e3" stroke-width=".6"/></svg>
<div class="tx " style="left:566.00px;top:423.78px;font-size:6.4px;color:#b8262d">2 problems</div>
<svg class="abs" style="left:620.5px;top:425.10px" width="4" height="7" viewBox="0 0 4 7"><g fill="#5a5a5a"><circle cx="2" cy="1" r=".6"/><circle cx="2" cy="3.4" r=".6"/><circle cx="2" cy="5.8" r=".6"/></g></svg>
<div class="abs" style="left:124px;top:461.50px;width:512px;height:1px;background:#ececec"></div>
<div class="ri team" style="top:445.10px"><svg width="12" height="12" viewBox="0 0 12 12"><use href="#g-team"/></svg></div>
<div class="tx " style="left:145.50px;top:442.65px;font-size:7.35px;color:#1d1d28;-webkit-text-stroke:.1px #1d1d28">Credit card team</div>
<div class="tx mono" style="left:145.50px;top:451.42px;font-size:6.3px;color:#6e6e76">aws-int-fargate-1</div>
<svg class="abs" style="left:503.20px;top:449.20px" width="4" height="4" viewBox="0 0 4 4"><circle cx="2" cy="2" r="1.5" fill="#6cbb6c"/></svg>
<div class="tx " style="left:510.50px;top:446.17px;font-size:7.0px;color:#333">0</div>
<svg class="abs" style="left:559.70px;top:449.20px" width="4" height="4" viewBox="0 0 4 4"><circle cx="2" cy="2" r="1.5" fill="#6cbb6c"/></svg>
<div class="tx " style="left:567.00px;top:446.17px;font-size:7.0px;color:#333">0</div>
<svg class="abs" style="left:620.5px;top:447.70px" width="4" height="7" viewBox="0 0 4 7"><g fill="#5a5a5a"><circle cx="2" cy="1" r=".6"/><circle cx="2" cy="3.4" r=".6"/><circle cx="2" cy="5.8" r=".6"/></g></svg>
<div class="abs" style="left:124px;top:484.10px;width:512px;height:1px;background:#ececec"></div>
<div class="ri search" style="top:467.70px"><svg width="12" height="12" viewBox="0 0 12 12"><use href="#g-search"/></svg></div>
<div class="tx " style="left:145.50px;top:465.25px;font-size:7.35px;color:#1d1d28;-webkit-text-stroke:.1px #1d1d28">Autocomplete parser</div>
<div class="tx mono" style="left:145.50px;top:474.02px;font-size:6.3px;color:#6e6e76">aws-int-fargate-1</div>
<svg class="abs" style="left:502.7px;top:470.5px" width="6" height="6" viewBox="0 0 6 6"><path d="M3 .5 5.7 5.3H.3z" fill="#b8262d" stroke="#b8262d" stroke-width=".5" stroke-linejoin="round"/><path d="M3 2.2v1.5M3 4.3v.5" stroke="#fbe3e3" stroke-width=".6"/></svg>
<div class="tx " style="left:510.00px;top:468.98px;font-size:6.4px;color:#b8262d">1 incident</div>
<svg class="abs" style="left:559.70px;top:471.80px" width="4" height="4" viewBox="0 0 4 4"><circle cx="2" cy="2" r="1.5" fill="#6cbb6c"/></svg>
<div class="tx " style="left:567.00px;top:468.77px;font-size:7.0px;color:#333">0</div>
<svg class="abs" style="left:620.5px;top:470.30px" width="4" height="7" viewBox="0 0 4 7"><g fill="#5a5a5a"><circle cx="2" cy="1" r=".6"/><circle cx="2" cy="3.4" r=".6"/><circle cx="2" cy="5.8" r=".6"/></g></svg>
<div class="abs" style="left:124px;top:506.70px;width:512px;height:1px;background:#ececec"></div>
<div class="ri code" style="top:490.30px"><svg width="12" height="12" viewBox="0 0 12 12"><use href="#g-code"/></svg></div>
<div class="tx " style="left:145.50px;top:487.85px;font-size:7.35px;color:#1d1d28;-webkit-text-stroke:.1px #1d1d28">Internal Farget #1</div>
<div class="tx mono" style="left:145.50px;top:496.62px;font-size:6.3px;color:#6e6e76">aws-int-fargate-1</div>
<svg class="abs" style="left:503.20px;top:494.40px" width="4" height="4" viewBox="0 0 4 4"><circle cx="2" cy="2" r="1.5" fill="#6cbb6c"/></svg>
<div class="tx " style="left:510.50px;top:491.37px;font-size:7.0px;color:#333">0</div>
<div class="tx " style="left:559.00px;top:491.63px;font-size:5.1px;color:#555">Not connected</div>
<svg class="abs" style="left:620.5px;top:492.90px" width="4" height="7" viewBox="0 0 4 7"><g fill="#5a5a5a"><circle cx="2" cy="1" r=".6"/><circle cx="2" cy="3.4" r=".6"/><circle cx="2" cy="5.8" r=".6"/></g></svg>
<div class="ri search" style="top:512.90px"><svg width="12" height="12" viewBox="0 0 12 12"><use href="#g-search"/></svg></div>
<div class="tx " style="left:145.50px;top:510.45px;font-size:7.35px;color:#1d1d28;-webkit-text-stroke:.1px #1d1d28">Admin customer support</div>
<div class="tx mono" style="left:145.50px;top:519.22px;font-size:6.3px;color:#6e6e76">aws-int-fargate-1</div>
<svg class="abs" style="left:503.20px;top:517.00px" width="4" height="4" viewBox="0 0 4 4"><circle cx="2" cy="2" r="1.5" fill="#6cbb6c"/></svg>
<div class="tx " style="left:510.50px;top:513.97px;font-size:7.0px;color:#333">0</div>
<svg class="abs" style="left:558.7px;top:515.7px" width="6" height="6" viewBox="0 0 6 6"><path d="M3 .5 5.7 5.3H.3z" fill="#b8262d" stroke="#b8262d" stroke-width=".5" stroke-linejoin="round"/><path d="M3 2.2v1.5M3 4.3v.5" stroke="#fbe3e3" stroke-width=".6"/></svg>
<div class="tx " style="left:566.00px;top:514.18px;font-size:6.4px;color:#b8262d">2 problems</div>
<svg class="abs" style="left:620.5px;top:515.50px" width="4" height="7" viewBox="0 0 4 7"><g fill="#5a5a5a"><circle cx="2" cy="1" r=".6"/><circle cx="2" cy="3.4" r=".6"/><circle cx="2" cy="5.8" r=".6"/></g></svg>
</div></body></html>
